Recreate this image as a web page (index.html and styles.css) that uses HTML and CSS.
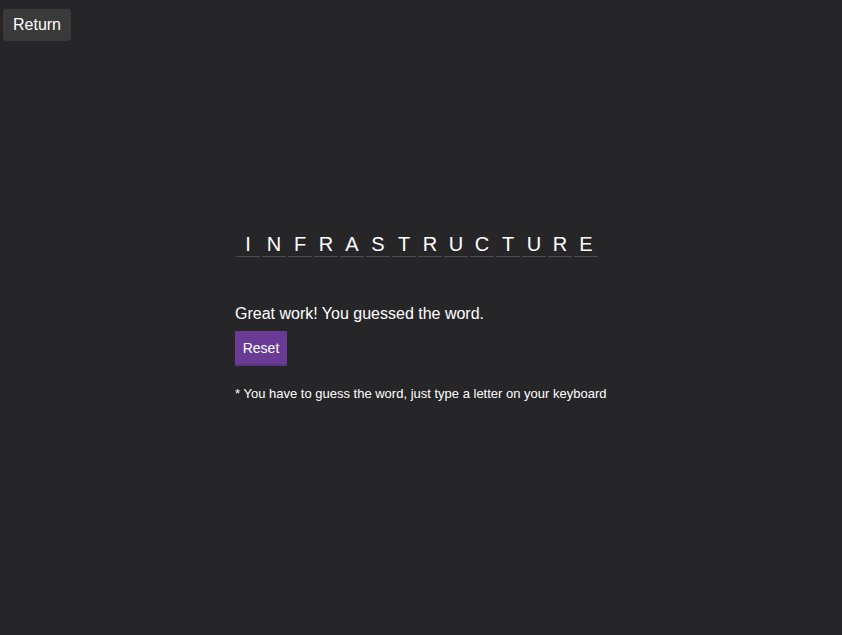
FILE: index.html
```html
<!DOCTYPE html>
<html>
<head>
<meta charset="utf-8">
<link rel="stylesheet" href="styles.css">
</head>
<body>
<button class="return">Return</button>
<main class="game">
  <div class="word">
    <span class="cell">I</span><span class="cell">N</span><span class="cell">F</span><span class="cell">R</span><span class="cell">A</span><span class="cell">S</span><span class="cell">T</span><span class="cell">R</span><span class="cell">U</span><span class="cell">C</span><span class="cell">T</span><span class="cell">U</span><span class="cell">R</span><span class="cell">E</span>
  </div>
  <p class="message">Great work! You guessed the word.</p>
  <button class="reset">Reset</button>
  <p class="note">* You have to guess the word, just type a letter on your keyboard</p>
</main>
</body>
</html>
```
FILE: styles.css
```css
html, body {
  margin: 0;
  padding: 0;
  background: #262628;
  color: #fff;
  font-family: "Liberation Sans", Arial, sans-serif;
  height: 100%;
}
.return {
  position: absolute;
  left: 3px;
  top: 9px;
  width: 68px;
  height: 32px;
  background: #3a3a3b;
  color: #fff;
  border: none;
  border-radius: 4px;
  font-family: inherit;
  font-size: 16px;
  padding: 0;
}
.game {
  width: 374px;
  margin: 0 auto;
  padding-top: 232px;
  padding-left: 1px;
  box-sizing: border-box;
}
.word {
  display: flex;
  gap: 2px;
  padding-left: 1px;
}
.cell {
  width: 24px;
  height: 24px;
  line-height: 24px;
  text-align: center;
  font-size: 20px;
  border-bottom: 1px solid #4d4d50;
}
.message {
  margin: 47px 0 0;
  font-size: 16px;
  line-height: 20px;
}
.reset {
  margin-top: 7px;
  width: 52px;
  height: 35px;
  background: #6a3b95;
  color: #fff;
  border: none;
  border-bottom: 2px solid #5c3282;
  font-family: inherit;
  font-size: 14px;
  padding: 0;
  display: block;
}
.note {
  margin: 20px 0 0;
  font-size: 13px;
  line-height: 16px;
}
```
